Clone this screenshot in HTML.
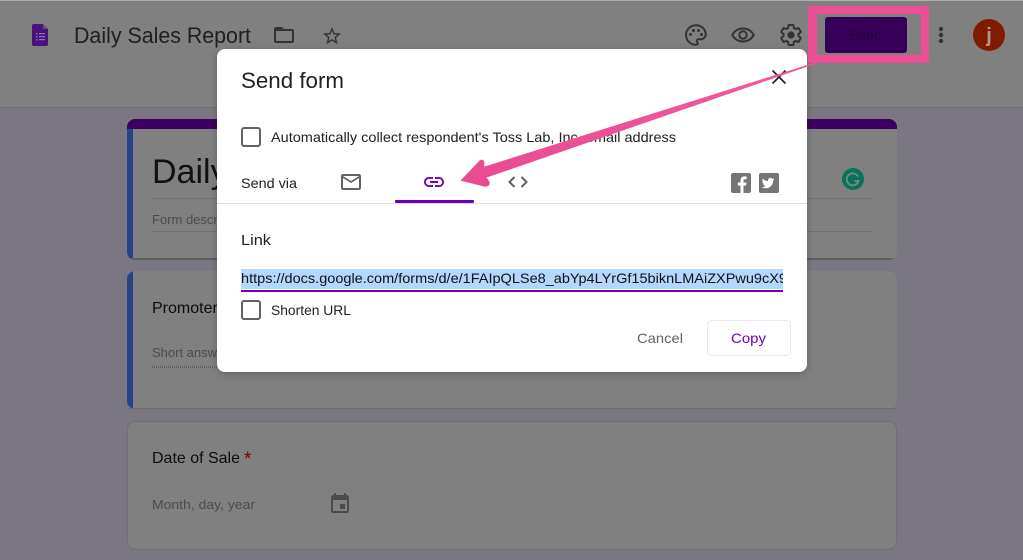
<!DOCTYPE html>
<html lang="en"><head><meta charset="utf-8"><title>Daily Sales Report</title>
<style>
html,body{margin:0;padding:0;width:1023px;height:560px;overflow:hidden;background:#7b7782}
svg{display:block}
text{font-family:"Liberation Sans",sans-serif}
</style></head><body>
<svg width="1023" height="560" viewBox="0 0 1023 560" xmlns="http://www.w3.org/2000/svg">
<defs>
<clipPath id="u"><rect x="241" y="268" width="542" height="22"/></clipPath>
<clipPath id="c1"><rect x="127" y="119" width="770" height="141" rx="8"/></clipPath>
<clipPath id="c2"><rect x="127" y="271" width="770" height="138" rx="8"/></clipPath>
<filter id="sh" x="-5%" y="-5%" width="110%" height="115%"><feDropShadow dx="0" dy="2" stdDeviation="4" flood-color="#000" flood-opacity=".22"/></filter>
<linearGradient id="ar" x1="0" y1="0" x2="0" y2="1"><stop offset="0" stop-color="#f25ba0"/><stop offset="1" stop-color="#e84a90"/></linearGradient>
</defs>
<rect width="1023" height="560" fill="#7b7782"/>
<rect width="1023" height="107" fill="#808080"/>
<rect y="0" width="1023" height="1" fill="#adadad"/>
<rect y="107" width="1023" height="1" fill="#716d75"/>

<path d="M34 24h9l5 5v15a2 2 0 0 1-2 2H34a2 2 0 0 1-2-2V26a2 2 0 0 1 2-2z" fill="#47127a"/>
<path d="M43 24l5 5h-5z" fill="#5e5470"/>
<g fill="#8e73ad"><rect x="36" y="33" width="1.5" height="1.5"/><rect x="39" y="33" width="6" height="1.2"/><rect x="36" y="36" width="1.5" height="1.5"/><rect x="39" y="36" width="6" height="1.2"/><rect x="36" y="39" width="1.5" height="1.5"/><rect x="39" y="39" width="6" height="1.2"/></g>
<text x="74" y="43" font-size="22" fill="#1f1f1f" textLength="177" lengthAdjust="spacingAndGlyphs">Daily Sales Report</text>
<path transform="translate(272 23)" fill="#333" d="M20 6h-8l-2-2H4c-1.100 0-1.990.9-1.990 2L2 18c0 1.100.9 2 2 2h16c1.100 0 2-.9 2-2V8c0-1.100-.9-2-2-2zm0 12H4V8h16v10z"/>
<path transform="translate(321.200 25.200) scale(.9)" fill="#333" d="M22 9.240l-7.190-.62L12 2 9.190 8.630 2 9.240l5.460 4.730L5.820 21 12 17.270 18.180 21l-1.630-7.030L22 9.240zM12 15.400l-3.760 2.270 1-4.280-3.320-2.880 4.380-.38L12 6.100l1.710 4.040 4.380.38-3.320 2.880 1 4.280L12 15.400z"/>

<g transform="translate(684 23)"><path d="M12 2.200C6.500 2.200 2 6.600 2 12s4.500 9.800 10 9.800c1 0 1.700-.7 1.700-1.600 0-.5-.2-.8-.5-1.200-.3-.3-.4-.7-.4-1.100 0-.9.800-1.700 1.700-1.700h2.300c2.800 0 4.900-2.100 4.900-4.900C21.700 6.300 17.400 2.200 12 2.200z" fill="none" stroke="#333" stroke-width="2"/><circle cx="6.500" cy="11.500" r="1.500" fill="#333"/><circle cx="9.500" cy="7.500" r="1.500" fill="#333"/><circle cx="14.500" cy="7.500" r="1.500" fill="#333"/><circle cx="17.500" cy="11.500" r="1.500" fill="#333"/></g>
<g transform="translate(731 23)"><path d="M12 5.500C7 5.500 3.200 8.300 1.300 12c1.900 3.700 5.700 6.500 10.700 6.500s8.800-2.800 10.700-6.500C20.800 8.300 17 5.500 12 5.500z" fill="none" stroke="#333" stroke-width="2"/><circle cx="12" cy="12" r="3.700" fill="none" stroke="#333" stroke-width="2"/></g>
<g transform="translate(779 23)"><path fill="none" stroke="#333" stroke-width="2" d="M19.430 12.980c.04-.32.07-.64.07-.98s-.03-.66-.07-.98l2.110-1.650c.19-.15.24-.42.12-.64l-2-3.460c-.12-.22-.39-.3-.61-.22l-2.490 1c-.52-.4-1.080-.73-1.690-.98l-.38-2.650C14.460 2.180 14.250 2 14 2h-4c-.25 0-.46.18-.49.42l-.38 2.650c-.61.25-1.170.59-1.690.98l-2.490-1c-.23-.09-.49 0-.61.22l-2 3.460c-.13.22-.07.49.12.64l2.110 1.650c-.04.32-.07.65-.07.98s.03.66.07.98l-2.110 1.650c-.19.15-.24.42-.12.64l2 3.460c.12.22.39.3.61.22l2.490-1c.52.4 1.080.73 1.690.98l.38 2.650c.03.24.24.42.49.42h4c.25 0 .46-.18.49-.42l.38-2.650c.61-.25 1.170-.59 1.690-.98l2.490 1c.23.09.49 0 .61-.22l2-3.460c.12-.22.07-.49-.12-.64l-2.110-1.650z"/><circle cx="12" cy="12" r="3.600" fill="#333"/></g>

<rect x="825" y="17" width="82" height="36" rx="3" fill="#360058"/>
<text x="849" y="40" font-size="14" fill="#27003f" textLength="33" lengthAdjust="spacingAndGlyphs">Send</text>
<g fill="#333"><circle cx="941" cy="29" r="2.200"/><circle cx="941" cy="35" r="2.200"/><circle cx="941" cy="41" r="2.200"/></g>
<circle cx="989" cy="35" r="16" fill="#811b00"/>
<text x="989" y="42" font-size="20" font-weight="bold" fill="#b09a88" text-anchor="middle">j</text>

<g clip-path="url(#c1)"><rect x="127" y="119" width="770" height="141" fill="#808080"/><rect x="127" y="119" width="770" height="10" fill="#3d0060"/><rect x="127" y="129" width="6" height="131" fill="#26438a"/><rect x="127" y="258" width="770" height="2" fill="#5f5f5f"/></g>
<rect x="152" y="198" width="720" height="1" fill="#717171"/>
<rect x="152" y="231" width="720" height="1" fill="#717171"/>
<text x="152" y="183" font-size="34" fill="#111">Daily</text>
<text x="152" y="224" font-size="13" fill="#4b4b50">Form description</text>
<circle cx="853" cy="179" r="11" fill="#087358"/>
<path d="M858 176.500a6 6 0 1 0 .5 4.500h-4" fill="none" stroke="#7f8a86" stroke-width="1.700"/>

<g clip-path="url(#c2)"><rect x="127" y="271" width="770" height="138" fill="#808080"/><rect x="127" y="271" width="6" height="138" fill="#26438a"/></g>
<rect x="127" y="408" width="770" height="1" fill="#6c6c6c"/>
<text x="152" y="313" font-size="16" fill="#0c0c0c">Promoter</text>
<text x="152" y="357" font-size="13" fill="#4b4b50">Short answer text</text>
<line x1="152" y1="367" x2="400" y2="367" stroke="#444" stroke-dasharray="1 1"/>

<rect x="127.500" y="421.500" width="769" height="128" rx="8" fill="#808080" stroke="#716d75"/>
<text x="152" y="463" font-size="16" fill="#0c0c0c" textLength="88" lengthAdjust="spacingAndGlyphs">Date of Sale</text>
<text x="244" y="465" font-size="19" fill="#7a0000">*</text>
<text x="152" y="509" font-size="13" fill="#4b4b50" textLength="103" lengthAdjust="spacingAndGlyphs">Month, day, year</text>
<path transform="translate(328 492)" fill="#4b4b4f" d="M17 12h-5v5h5v-5zM16 1v2H8V1H6v2H5c-1.110 0-1.990.9-1.990 2L3 19c0 1.100.89 2 2 2h14c1.100 0 2-.9 2-2V5c0-1.100-.9-2-2-2h-1V1h-2zm3 18H5V8h14v11z"/>

<rect x="217" y="49" width="590" height="323" rx="8" fill="#fff" filter="url(#sh)"/>
<text x="241" y="88" font-size="22" fill="#202124" textLength="103" lengthAdjust="spacingAndGlyphs">Send form</text>
<path d="M772.500 70.500l13 13M785.500 70.500l-13 13" stroke="#202124" stroke-width="1.700" fill="none"/>

<rect x="242" y="128" width="18" height="18" rx="2" fill="none" stroke="#5f6368" stroke-width="2"/>
<text x="271" y="142" font-size="14" fill="#202124" textLength="405" lengthAdjust="spacingAndGlyphs">Automatically collect respondent's Toss Lab, Inc. email address</text>
<text x="241" y="188" font-size="14" fill="#202124" textLength="56" lengthAdjust="spacingAndGlyphs">Send via</text>
<path transform="translate(339 170)" fill="#5f6368" d="M20 4H4c-1.100 0-2 .9-2 2v12c0 1.100.9 2 2 2h16c1.100 0 2-.9 2-2V6c0-1.100-.9-2-2-2zm0 14H4V8l8 5 8-5v10zm-8-7L4 6h16l-8 5z"/>
<path transform="translate(422 170)" fill="#6f00c0" d="M3.900 12c0-1.710 1.390-3.100 3.100-3.100h4V7H7c-2.760 0-5 2.240-5 5s2.240 5 5 5h4v-1.900H7c-1.710 0-3.100-1.390-3.100-3.100zM8 13h8v-2H8v2zm9-6h-4v1.900h4c1.710 0 3.100 1.390 3.100 3.100s-1.390 3.100-3.100 3.100h-4V17h4c2.760 0 5-2.240 5-5s-2.240-5-5-5z"/>
<path d="M514.500 177l-5 5 5 5M521.500 177l5 5-5 5" fill="none" stroke="#5f6368" stroke-width="2"/>
<rect x="731" y="173" width="20" height="20" rx="2" fill="#757575"/>
<path d="M743.500 193v-7.500h2.600l.4-3h-3v-1.900c0-.9.3-1.400 1.500-1.400h1.600v-2.700c-.3 0-1.200-.1-2.300-.1-2.300 0-3.800 1.400-3.800 3.900v2.200h-2.600v3h2.600v7.500z" fill="#fff"/>
<rect x="759" y="173" width="20" height="20" rx="2" fill="#757575"/>
<path transform="translate(769 183) scale(.78) translate(-769 -183)" d="M776 178.200c-.6.300-1.200.4-1.900.5.700-.4 1.200-1 1.400-1.800-.6.400-1.300.6-2.100.8a3.300 3.300 0 0 0-5.700 3c-2.800-.1-5.200-1.400-6.800-3.400-.8 1.500-.4 3.400 1 4.400-.5 0-1-.2-1.500-.4 0 1.600 1.100 2.900 2.600 3.200-.5.100-1 .2-1.500.1.400 1.300 1.600 2.200 3.100 2.300-1.400 1.100-3.200 1.600-4.900 1.400 1.500.9 3.200 1.500 5.100 1.500 6.200 0 9.700-5.200 9.500-9.900.7-.4 1.300-1 1.700-1.700z" fill="#fff"/>
<rect x="217" y="203" width="590" height="1" fill="#e0e0e0"/>
<rect x="395" y="200" width="79" height="3" rx="1" fill="#6a00bd"/>

<text x="241" y="245" font-size="15" fill="#202124" textLength="30" lengthAdjust="spacingAndGlyphs">Link</text>
<rect x="241" y="269" width="542" height="20" fill="#b3d7ff"/>
<text x="241" y="283" font-size="14" fill="#111" clip-path="url(#u)" textLength="546" lengthAdjust="spacingAndGlyphs">https://docs.google.com/forms/d/e/1FAIpQLSe8_abYp4LYrGf15biknLMAiZXPwu9cX9</text>
<rect x="241" y="290" width="542" height="2" fill="#6f00b5"/>
<rect x="242" y="301" width="18" height="18" rx="2" fill="none" stroke="#5f6368" stroke-width="2"/>
<text x="271" y="315" font-size="14" fill="#202124" textLength="80" lengthAdjust="spacingAndGlyphs">Shorten URL</text>
<text x="637" y="343" font-size="14" fill="#5f6368" textLength="46" lengthAdjust="spacingAndGlyphs">Cancel</text>
<rect x="707.500" y="320.500" width="83" height="35" rx="4" fill="#fff" stroke="#e8e8ee"/>
<text x="731" y="343" font-size="14" fill="#6f00c0" textLength="35" lengthAdjust="spacingAndGlyphs">Copy</text>

<path d="M808 6h121v57H808zM817 14v41h104V14z" fill="#ec4f96" fill-rule="evenodd"/>
<path d="M840 55 L484 167 L484 161.500 Q482.500 159 480 160.500 L461 180.500 L485 186.500 Q489 186.500 489.500 183.500 Q489.500 181 486 177.500 Z" fill="url(#ar)" stroke="#ec4f96" stroke-width=".6" stroke-linejoin="round"/>
</svg>
</body></html>
